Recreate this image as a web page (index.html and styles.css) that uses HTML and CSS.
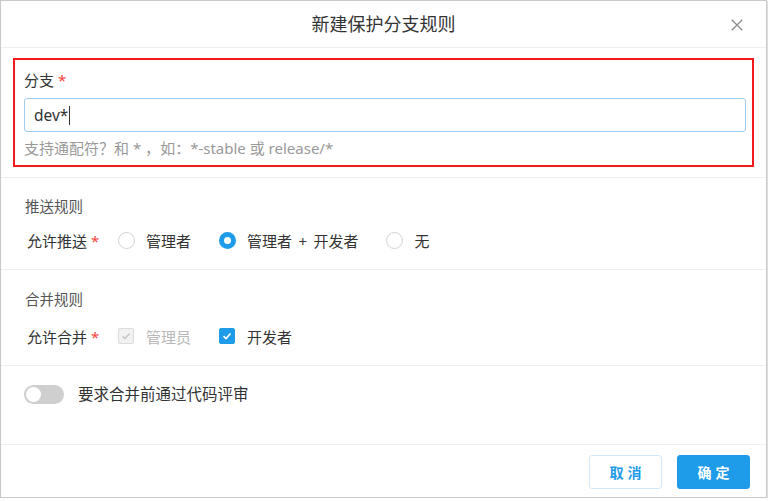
FILE: index.html
```html
<!DOCTYPE html>
<html lang="zh-CN">
<head>
<meta charset="utf-8">
<title>新建保护分支规则</title>
<link rel="stylesheet" href="styles.css">
</head>
<body>
<div class="dialog">
  <div class="header">
    <div class="title">新建保护分支规则</div>
    <svg class="close" width="16" height="16" viewBox="0 0 16 16"><path d="M2 2 L14 14 M14 2 L2 14" stroke="#8a8a8a" stroke-width="1.5" fill="none"/></svg>
  </div>

  <div class="section branch">
    <div class="mark">
      <div class="field-label">分支 <span class="req">*</span></div>
      <div class="input"><span class="value">dev*</span><span class="caret"></span></div>
      <div class="hint">支持通配符<span class="cjk">？</span>和 * <span class="cjk">，</span>如<span class="cjk">：</span>*-stable 或 release/*</div>
    </div>
  </div>

  <div class="section rules push">
    <div class="sec-title">推送规则</div>
    <div class="row">
      <div class="row-label">允许推送 <span class="req">*</span></div>
      <div class="opt"><span class="radio"></span><span>管理者</span></div>
      <div class="opt"><span class="radio on"></span><span class="spaced">管理者 + 开发者</span></div>
      <div class="opt"><span class="radio"></span><span>无</span></div>
    </div>
  </div>

  <div class="section rules merge">
    <div class="sec-title">合并规则</div>
    <div class="row">
      <div class="row-label">允许合并 <span class="req">*</span></div>
      <div class="opt disabled"><span class="check dis"><svg width="12" height="12" viewBox="0 0 12 12"><path d="M2.5 6.2 L5 8.5 L9.5 3.5" stroke="#c4c4c4" stroke-width="1.4" fill="none"/></svg></span><span>管理员</span></div>
      <div class="opt"><span class="check on"><svg width="12" height="12" viewBox="0 0 12 12"><path d="M2.5 6.2 L5 8.5 L9.5 3.5" stroke="#fff" stroke-width="1.6" fill="none"/></svg></span><span>开发者</span></div>
    </div>
  </div>

  <div class="section review">
    <span class="toggle"><span class="knob"></span></span>
    <span class="review-text">要求合并前通过代码评审</span>
  </div>

  <div class="footer">
    <button class="btn cancel">取消</button>
    <button class="btn ok">确定</button>
  </div>
</div>
</body>
</html>
```

FILE: styles.css
```css
* { box-sizing: border-box; }
html, body { margin: 0; padding: 0; background: #fff; }
body {
  font-family: "Noto Sans", "Noto Sans CJK SC", sans-serif;
  color: #333;
  font-size: 15px;
}
.dialog {
  width: 767px;
  height: 498px;
  border: 1px solid #c9c9c9;
  box-shadow: 1px 1px 0 #dedede;
  display: flex;
  flex-direction: column;
  background: #fff;
}
.header {
  height: 47px;
  border-bottom: 1px solid #efefef;
  display: flex;
  align-items: center;
  justify-content: center;
  position: relative;
}
.title { font-size: 18px; color: #333; line-height: 20px; }
.close { position: absolute; right: 22px; top: 17px; width: 14px; height: 14px; }

.section { border-bottom: 1px solid #eeeeee; }
.branch { padding: 10px 12px 10px 12px; }
.mark {
  border: 2px solid #f21a1a;
  padding: 10px 6px 7px 9px;
}
.field-label { line-height: 20px; font-size: 15px; color: #333; }
.req { color: #f5443c; }
.input {
  margin-top: 8px;
  height: 34px;
  border: 1px solid #9fcdef;
  border-radius: 3px;
  display: flex;
  align-items: center;
  padding-left: 9px;
}
.value { font-size: 15.5px; color: #333; }
.caret { display: inline-block; width: 1px; height: 19px; background: #333; margin-left: 1px; }
.hint { margin-top: 6px; font-size: 15px; color: #999; line-height: 20px; }
.cjk { font-family: "Noto Sans CJK SC", sans-serif; }

.rules { padding: 18px 24px 13px 24px; }
.merge { padding-top: 19px; }
.sec-title { font-size: 14.5px; color: #555; line-height: 20px; }
.row { display: flex; align-items: center; height: 32px; }
.push .row { margin-top: 8px; }
.merge .row { margin-top: 11px; }
.row-label { width: 93px; padding-left: 2px; font-size: 15px; color: #333; }
.opt { display: flex; align-items: center; margin-right: 28px; font-size: 15px; color: #333; }
.opt.disabled { color: #b8b8b8; }
.spaced { word-spacing: 2.5px; }
.radio {
  width: 17px; height: 17px; border-radius: 50%;
  border: 1px solid #d2d2d2; background: #fff;
  margin-right: 11px;
}
.radio.on { border: 5px solid #1e9be9; }
.check {
  width: 16px; height: 16px; border-radius: 2px;
  display: flex; align-items: center; justify-content: center;
  margin-right: 12px;
}
.check.dis { background: #f2f2f2; border: 1px solid #dcdcdc; }
.check.on { background: #1e9be9; border: 1px solid #1e9be9; }

.review {
  height: 79px;
  display: flex;
  align-items: flex-start;
  padding: 19px 0 0 23px;
}
.toggle {
  width: 40px; height: 19px; border-radius: 10px; background: #cfcfcf;
  position: relative; display: inline-block; margin-right: 14px;
}
.knob {
  position: absolute; left: 2px; top: 2px; width: 15px; height: 15px; border-radius: 50%; background: #fff;
}
.review-text { font-size: 15.5px; color: #333; line-height: 19px; }

.footer {
  flex: 1;
  display: flex;
  justify-content: flex-end;
  align-items: flex-start;
  padding: 10px 16px 0 0;
  gap: 15px;
}
.btn {
  width: 73px; height: 34px; border-radius: 3px;
  font-family: "Noto Sans CJK SC", sans-serif;
  font-size: 14px; font-weight: 700; letter-spacing: 4px; text-indent: 4px;
  cursor: pointer;
}
.cancel { background: #fff; border: 1px solid #d3e9fa; color: #1e9be9; }
.ok { background: #1e9be9; border: 1px solid #1e9be9; color: #fff; }
```
